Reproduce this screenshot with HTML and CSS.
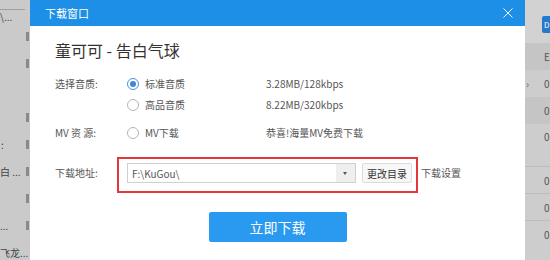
FILE: index.html
```html
<!DOCTYPE html>
<html lang="zh-CN">
<head>
    <meta charset="UTF-8">
    <title>下载窗口</title>
    <link rel="stylesheet" href="styles.css">
</head>
<body>
    <div class="screen">
        <!-- lista de fondo, izquierda -->
        <aside class="side-left">
            <div class="side-top"><span class="frag">\...</span></div>
            <div class="side-row"><span class="frag"></span><i class="mark"></i></div>
            <div class="side-row"><span class="frag"></span><i class="mark"></i></div>
            <div class="side-row"><span class="frag"></span></div>
            <div class="side-row"><span class="frag"></span><i class="mark"></i></div>
            <div class="side-row"><span class="frag sliver">:</span><i class="mark"></i></div>
            <div class="side-row"><span class="frag">白 ...</span><i class="mark"></i></div>
            <div class="side-row"><span class="frag"></span><i class="mark"></i></div>
            <div class="side-row"><span class="frag">...</span><i class="mark"></i></div>
            <div class="side-row"><span class="frag">飞龙...</span></div>
        </aside>

        <div class="dialog">
            <header class="dialog-title">
                <span>下载窗口</span>
                <svg class="close" width="10" height="10" viewBox="0 0 10 10">
                    <path d="M0.5 0.5 L9.5 9.5 M9.5 0.5 L0.5 9.5" stroke="#fff" stroke-width="1" fill="none"/>
                </svg>
            </header>
            <main class="dialog-body">
                <h1 class="song">童可可 - 告白气球</h1>

                <div class="opt-row">
                    <span class="label">选择音质:</span>
                    <span class="radio checked"></span>
                    <span class="opt-name">标准音质</span>
                    <span class="opt-info">3.28MB/128kbps</span>
                </div>
                <div class="opt-row">
                    <span class="label"></span>
                    <span class="radio"></span>
                    <span class="opt-name">高品音质</span>
                    <span class="opt-info">8.22MB/320kbps</span>
                </div>
                <div class="opt-row mv">
                    <span class="label">MV 资 源:</span>
                    <span class="radio"></span>
                    <span class="opt-name">MV下载</span>
                    <span class="opt-info">恭喜!海量MV免费下载</span>
                </div>

                <div class="path-row">
                    <span class="label path-label">下载地址:</span>
                    <div class="path-box">
                        <div class="select">
                            <span class="select-text">F:\KuGou\</span>
                            <span class="select-arrow"></span>
                        </div>
                        <button class="btn-change">更改目录</button>
                    </div>
                    <span class="link">下载设置</span>
                </div>

                <div class="actions">
                    <button class="btn-download">立即下载</button>
                </div>
            </main>
        </div>

        <!-- lista de fondo, derecha -->
        <aside class="side-right">
            <div class="r-head"><span class="r-btn">D</span></div>
            <div class="r-row dark"><span>E</span></div>
            <div class="r-row"><b>›</b><span>0</span></div>
            <div class="r-row dark"><span>0</span></div>
            <div class="r-row tall"><span>0</span></div>
            <div class="r-row line"><span>0</span></div>
            <div class="r-row line"><span>0</span></div>
            <div class="r-row line"><span>0</span></div>
        </aside>
    </div>
</body>
</html>
```

FILE: styles.css
```css
body, html {
    margin: 0;
    padding: 0;
    font-family: "Noto Sans CJK SC", "Noto Sans", sans-serif;
    background-color: #c9c9c9;
}

.screen {
    width: 550px;
    height: 260px;
    display: flex;
    overflow: hidden;
}

/* ---- fondo izquierdo ---- */
.side-left {
    width: 30px;
    flex-shrink: 0;
    background-color: #cacaca;
    overflow: hidden;
}

.side-top {
    margin-top: 9px;
    height: 14px;
    border-top: 1px solid #a0a0a0;
    width: 25px;
    box-sizing: border-box;
    display: flex;
    align-items: center;
}

.side-row {
    height: 27px;
    display: flex;
    align-items: center;
    justify-content: space-between;
}

.frag {
    font-size: 10px;
    color: #444;
    white-space: nowrap;
}

.frag.sliver {
    padding-left: 1px;
}

.mark {
    width: 3px;
    height: 9px;
    background-color: #8a8a8a;
    margin-right: 1px;
    flex-shrink: 0;
}

/* ---- ventana ---- */
.dialog {
    width: 495px;
    flex-shrink: 0;
    background-color: #ffffff;
    display: flex;
    flex-direction: column;
}

.dialog-title {
    height: 26px;
    background-color: #1e8fe6;
    display: flex;
    align-items: center;
    justify-content: space-between;
    padding: 0 12px 0 15px;
    color: #ffffff;
    font-size: 11px;
}

.close {
    display: block;
}

.dialog-body {
    padding: 0 25px;
}

.song {
    margin: 14px 0 13px;
    font-size: 16px;
    line-height: 20px;
    font-weight: normal;
    color: #333;
}

.opt-row {
    display: flex;
    align-items: center;
    height: 21px;
    font-size: 10px;
    color: #555;
}

.opt-row.mv {
    margin-top: 7px;
}

.label {
    width: 72px;
    flex-shrink: 0;
    font-size: 10px;
    color: #555;
}

.radio {
    width: 10px;
    height: 10px;
    border: 1px solid #b5b5b5;
    border-radius: 50%;
    margin-right: 6px;
    position: relative;
    flex-shrink: 0;
}

.radio.checked {
    border-color: #4a90dc;
}

.radio.checked::after {
    content: "";
    position: absolute;
    left: 2px;
    top: 2px;
    width: 6px;
    height: 6px;
    border-radius: 50%;
    background-color: #3d87d8;
}

.opt-name {
    width: 121px;
    flex-shrink: 0;
}

.opt-info {
    color: #555;
}

.path-row {
    display: flex;
    align-items: flex-start;
    margin-top: 14px;
    font-size: 10px;
}

.path-row > .label,
.path-row > .link {
    margin-top: 6px;
    line-height: 20px;
}

.path-label {
    width: 62px;
}

.path-box {
    border: 2px solid #e3383a;
    height: 28px;
    width: 285px;
    display: flex;
    align-items: flex-start;
    padding: 4px 4px 0 8px;
    gap: 6px;
}

.select {
    width: 229px;
    height: 20px;
    box-sizing: border-box;
    border: 1px solid #d0d0d0;
    display: flex;
    align-items: center;
}

.select-text {
    flex: 1;
    padding-left: 4px;
    color: #555;
    font-size: 10px;
}

.select-arrow {
    width: 19px;
    height: 18px;
    background-color: #efefef;
    position: relative;
}

.select-arrow::after {
    content: "";
    position: absolute;
    left: 7px;
    top: 8px;
    border-left: 2.5px solid transparent;
    border-right: 2.5px solid transparent;
    border-top: 3px solid #555;
}

.btn-change {
    width: 50px;
    height: 20px;
    padding: 0;
    border: 1px solid #dcdcdc;
    background-color: #f7f7f7;
    font-family: inherit;
    font-size: 10px;
    color: #333;
    border-radius: 2px;
}

.link {
    margin-left: 3px;
    color: #555;
}

.actions {
    display: flex;
    justify-content: center;
    margin-top: 19px;
}

.btn-download {
    width: 138px;
    height: 30px;
    border: none;
    border-radius: 2px;
    background-color: #2a9af0;
    color: #ffffff;
    font-family: inherit;
    font-size: 14px;
}

/* ---- fondo derecho ---- */
.side-right {
    flex: 1;
    background-color: #cdcdcd;
    font-size: 10px;
    color: #555;
    overflow: hidden;
}

.r-head {
    height: 43px;
    background-color: #d2d2d2;
    display: flex;
    align-items: flex-start;
    padding-top: 16px;
    padding-left: 17px;
    box-sizing: border-box;
}

.r-btn {
    flex-shrink: 0;
    width: 8px;
    height: 17px;
    background-color: #2579cc;
    border-radius: 2px 0 0 2px;
    color: #fff;
    font-size: 8px;
    padding-left: 2px;
    line-height: 17px;
    box-sizing: border-box;
    overflow: hidden;
}

.r-row {
    height: 27px;
    display: flex;
    align-items: center;
    padding-left: 19px;
    position: relative;
}

.r-row.dark {
    background-color: #c5c5c5;
}

.r-row.tall {
    height: 42px;
    align-items: flex-start;
    padding-top: 5px;
    box-sizing: border-box;
}

.r-row.line {
    border-top: 1px solid #bcbcbc;
    height: 27px;
    box-sizing: border-box;
}

.r-row b {
    position: absolute;
    left: 1px;
    font-weight: normal;
    color: #666;
}
```
